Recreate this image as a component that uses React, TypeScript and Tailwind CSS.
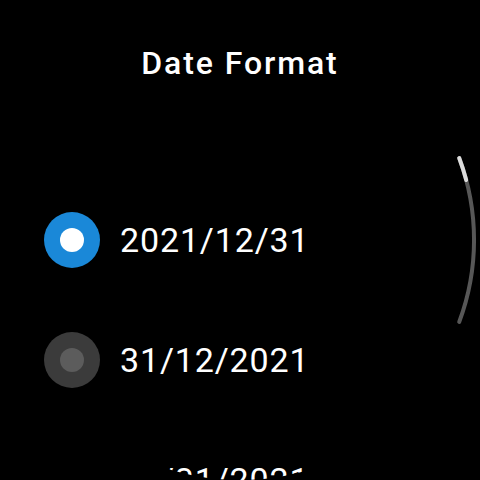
import React from "react";

const items = [
  { label: "2021/12/31", selected: true },
  { label: "31/12/2021", selected: false },
  { label: "12/31/2021", selected: false },
];

function Radio({ selected }: { selected: boolean }) {
  return (
    <div
      className={`w-[56px] h-[56px] rounded-full flex items-center justify-center shrink-0 ${
        selected ? "bg-[#1a88d8]" : "bg-[#3b3b3b]"
      }`}
    >
      <div
        className={`w-[24px] h-[24px] rounded-full ${
          selected ? "bg-white" : "bg-[#5c5c5c]"
        }`}
      />
    </div>
  );
}

export default function App() {
  return (
    <div className="w-[480px] h-[480px] bg-black">
      <div
        className="relative w-[480px] h-[480px] rounded-full overflow-hidden bg-black text-white"
        style={{ fontFamily: "Roboto, 'Noto Sans', sans-serif" }}
      >
        <div className="flex flex-col">
          <div className="pt-[47px] h-[180px] flex justify-center">
            <div className="text-[32px] leading-none font-medium h-[32px] tracking-[1.9px]">Date Format</div>
          </div>
          {items.map((it) => (
            <div key={it.label} className="h-[120px] flex items-center pl-[44px] gap-[20px] shrink-0">
              <Radio selected={it.selected} />
              <div className="text-[34px] leading-none tracking-[0.85px]">{it.label}</div>
            </div>
          ))}
        </div>
        <svg className="absolute left-0 top-0" width="480" height="480" viewBox="0 0 480 480">
          <path
            d="M 459.2 158 A 234 234 0 0 1 459.2 322"
            fill="none"
            stroke="#575757"
            strokeWidth="4"
            strokeLinecap="round"
          />
          <path
            d="M 459.2 158 A 234 234 0 0 1 466.2 180"
            fill="none"
            stroke="#dcdcdc"
            strokeWidth="4"
            strokeLinecap="round"
          />
        </svg>
      </div>
    </div>
  );
}
